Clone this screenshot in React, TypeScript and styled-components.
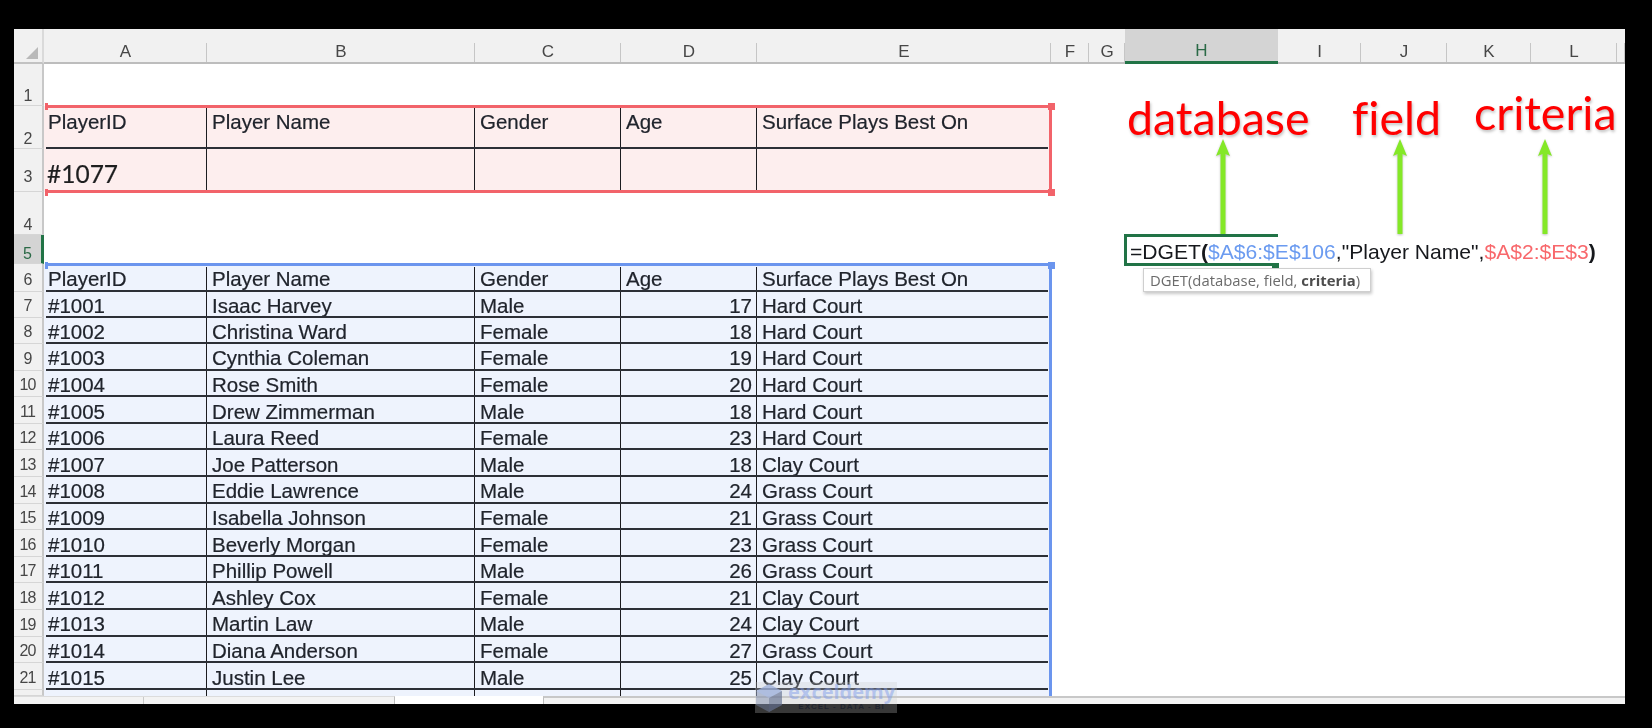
import React from "react";
import styled, { createGlobalStyle } from "styled-components";

const Global = createGlobalStyle`
  html, body { margin: 0; padding: 0; background: #000; }
  body { font-family: "Liberation Sans", Arial, sans-serif; }
`;

const Page = styled.div`
  position: relative;
  width: 1652px;
  height: 728px;
  background: #000;
  padding: 29px 27px 24px 14px;
  box-sizing: border-box;
  overflow: hidden;
`;

const Frame = styled.div`
  position: relative;
  display: flex;
  flex-direction: column;
  height: 675px;
  background: #f3f3f3;
  filter: blur(0.5px);
`;

const Sheet = styled.div`
  position: relative;
  display: grid;
  grid-template-columns: 30px 163px 268px 146px 136px 294px 38px 36px 153px 83px 86px 84px 86px 8px;
  grid-template-rows: 35px 42px 43px 43px 43px 29px 28px 25.5px repeat(14, 26.6px) 6.1px;
  height: 667px;
  background: #fff;
  overflow: hidden;
`;

const Corner = styled.div`
  display: flex;
  align-items: flex-end;
  justify-content: flex-end;
  background: #f1f1f1;
  border-bottom: 2px solid #c2c2c2;
  border-right: 2px solid #dadada;
  padding: 0 4px 3px 0;
  box-sizing: border-box;
`;

const ColHead = styled.div<{ $active?: boolean }>`
  position: relative;
  display: flex;
  align-items: flex-end;
  justify-content: center;
  padding-bottom: 1px;
  box-sizing: border-box;
  font-size: 17px;
  line-height: 19px;
  color: ${(p) => (p.$active ? "#2b6a47" : "#474747")};
  background: ${(p) => (p.$active ? "#d4d4d4" : "#f1f1f1")};
  border-bottom: ${(p) => (p.$active ? "3px solid #217346" : "2px solid #bdbdbd")};
  &::after {
    content: "";
    position: absolute;
    right: 0;
    bottom: 0;
    top: 14px;
    width: 1.5px;
    background: ${(p) => (p.$active ? "transparent" : "#c6c6c6")};
  }
`;

const RowHead = styled.div<{ $active?: boolean; $pad: number }>`
  grid-column: 1;
  display: flex;
  align-items: flex-end;
  justify-content: center;
  box-sizing: border-box;
  padding: 0 1px ${(p) => p.$pad}px 0;
  font-size: 16px;
  line-height: 18px;
  letter-spacing: -0.8px;
  color: ${(p) => (p.$active ? "#2b6a47" : "#474747")};
  background: ${(p) => (p.$active ? "#d4d4d4" : "#f1f1f1")};
  border-bottom: 1.5px solid #d6d6d6;
  border-right: ${(p) => (p.$active ? "3px solid #217346" : "2px solid #c8c8c8")};
`;

const Cell = styled.div<{
  $tone: "red" | "blue";
  $first?: boolean;
  $last?: boolean;
  $num?: boolean;
  $line?: boolean;
  $gap?: number;
  $end?: number;
  $place?: "top" | "mid" | "low";
}>`
  position: relative;
  display: flex;
  box-sizing: border-box;
  justify-content: ${(p) => (p.$num ? "flex-end" : "flex-start")};
  align-items: ${(p) => (p.$place === "top" ? "flex-start" : p.$place === "low" ? "flex-end" : "center")};
  padding: ${(p) => (p.$place === "top" ? "4px" : p.$place === "low" ? "0" : "2px")} 5px 0 ${(p) => (p.$first ? 4 : 5)}px;
  font-size: 20.5px;
  line-height: 24px;
  color: #20242c;
  -webkit-text-stroke: 0.2px #20242c;
  white-space: nowrap;
  background: ${(p) => (p.$tone === "red" ? "#fdeeee" : "#eef3fd")};
  &::before {
    content: "";
    display: ${(p) => (p.$last ? "none" : "block")};
    position: absolute;
    top: ${(p) => p.$gap ?? 0}px;
    right: 0;
    bottom: ${(p) => p.$end ?? 0}px;
    width: 1.5px;
    background: #1c1c20;
  }
  &::after {
    content: "";
    display: ${(p) => (p.$line ? "block" : "none")};
    position: absolute;
    left: ${(p) => (p.$first ? 2 : 0)}px;
    right: ${(p) => (p.$last ? 3 : 0)}px;
    bottom: 0;
    height: 2px;
    background: #2c2f36;
  }
`;

const BigId = styled.span`
  font-family: Lato, "Open Sans", sans-serif;
  font-size: 24.5px;
  line-height: 30px;
  margin: 0 0 3px -1px;
  color: #1e1e1e;
`;

const RangeBox = styled.div<{ $color: string; $top: number; $height: number }>`
  position: absolute;
  left: 33px;
  top: ${(p) => p.$top}px;
  width: 1005px;
  height: ${(p) => p.$height}px;
  box-sizing: border-box;
  border: 3px solid ${(p) => p.$color};
  border-left: none;
`;

const Handle = styled.div<{ $color: string; $left: number; $top: number; $w?: number }>`
  position: absolute;
  left: ${(p) => p.$left}px;
  top: ${(p) => p.$top}px;
  width: ${(p) => p.$w ?? 7}px;
  height: 7px;
  background: ${(p) => p.$color};
`;

const ActiveCell = styled.div`
  position: absolute;
  left: 1110px;
  top: 205px;
  width: 154px;
  height: 32px;
  box-sizing: border-box;
  border: 3px solid #217346;
  border-right: none;
`;

const FillHandle = styled.div`
  position: absolute;
  left: 1258px;
  top: 234px;
  width: 7px;
  height: 5px;
  background: #217346;
`;

const Formula = styled.div`
  position: absolute;
  left: 1116px;
  top: 210px;
  font-size: 21.1px;
  line-height: 26px;
  color: #16181c;
  white-space: nowrap;
`;

const Ref = styled.span<{ $c: string }>`
  color: ${(p) => p.$c};
`;

const Paren = styled.b`
  font-weight: 700;
`;

const Tip = styled.div`
  position: absolute;
  left: 1129px;
  top: 239px;
  width: 228px;
  height: 24px;
  box-sizing: border-box;
  display: flex;
  align-items: center;
  padding: 0 0 1px 6px;
  background: #fff;
  border: 1px solid #cfcfcf;
  box-shadow: 1px 2px 3px rgba(0, 0, 0, 0.22);
  font-family: "Open Sans", sans-serif;
  font-size: 14.85px;
  color: #6b6b6b;
  white-space: nowrap;
  b { font-weight: 700; color: #4d4d4d; }
`;

const Note = styled.div<{ $left: number; $top: number }>`
  position: absolute;
  left: ${(p) => p.$left}px;
  top: ${(p) => p.$top}px;
  font-family: Lato, "Open Sans", sans-serif;
  font-size: 46.5px;
  line-height: 56px;
  font-variant-ligatures: none;
  color: #ff0000;
  white-space: nowrap;
  text-shadow: 1px 2px 3px rgba(0, 0, 0, 0.25);
`;

const ArrowSvg = styled.svg<{ $left: number }>`
  position: absolute;
  left: ${(p) => p.$left}px;
  top: 109px;
  width: 18px;
  height: 98px;
  filter: drop-shadow(0 1px 1px rgba(0, 0, 0, 0.25));
`;

const TabStrip = styled.div`
  display: flex;
  height: 8px;
  background: #f3f3f3;
`;

const TabLeft = styled.div`
  width: 381px;
  box-sizing: border-box;
  background: linear-gradient(to right, #f3f3f3 129px, #c9c9c9 129px, #c9c9c9 130px, #f3f3f3 130px);
  border-top: 1.5px solid #dcdcdc;
  border-right: 1.5px solid #bdbdbd;
`;

const TabActive = styled.div`
  width: 148px;
  background: #fff;
`;

const TabRight = styled.div`
  flex: 1;
  box-sizing: border-box;
  border-left: 1.5px solid #bdbdbd;
  border-top: 2.5px solid #c8c8c8;
  background: #f3f3f3;
`;

const Watermark = styled.div`
  position: absolute;
  left: 755px;
  top: 682px;
  width: 142px;
  height: 31px;
  background: rgba(200, 200, 200, 0.28);
  display: flex;
  gap: 5px;
`;

const WmLogo = styled.svg`
  width: 28px;
  height: 31px;
  flex: none;
`;

const WmText = styled.div`
  display: flex;
  flex-direction: column;
  align-items: center;
`;

const WmName = styled.div`
  font-family: "Open Sans", sans-serif;
  font-weight: 700;
  font-size: 20px;
  line-height: 20px;
  color: rgba(125, 155, 235, 0.48);
`;

const WmSub = styled.div`
  font-family: "Liberation Sans", sans-serif;
  font-weight: 700;
  font-size: 8px;
  line-height: 10px;
  letter-spacing: 1px;
  color: #20242e;
  white-space: nowrap;
`;

const cols: [string, boolean?][] = [
  ["A"], ["B"], ["C"], ["D"], ["E"], ["F"], ["G"], ["H", true], ["I"], ["J"], ["K"], ["L"], [""],
];

const players: [string, string, string, number, string][] = [
  ["#1001", "Isaac Harvey", "Male", 17, "Hard Court"],
  ["#1002", "Christina Ward", "Female", 18, "Hard Court"],
  ["#1003", "Cynthia Coleman", "Female", 19, "Hard Court"],
  ["#1004", "Rose Smith", "Female", 20, "Hard Court"],
  ["#1005", "Drew Zimmerman", "Male", 18, "Hard Court"],
  ["#1006", "Laura Reed", "Female", 23, "Hard Court"],
  ["#1007", "Joe Patterson", "Male", 18, "Clay Court"],
  ["#1008", "Eddie Lawrence", "Male", 24, "Grass Court"],
  ["#1009", "Isabella Johnson", "Female", 21, "Grass Court"],
  ["#1010", "Beverly Morgan", "Female", 23, "Grass Court"],
  ["#1011", "Phillip Powell", "Male", 26, "Grass Court"],
  ["#1012", "Ashley Cox", "Female", 21, "Clay Court"],
  ["#1013", "Martin Law", "Male", 24, "Clay Court"],
  ["#1014", "Diana Anderson", "Female", 27, "Grass Court"],
  ["#1015", "Justin Lee", "Male", 25, "Clay Court"],
];

const headers = ["PlayerID", "Player Name", "Gender", "Age", "Surface Plays Best On"];

type Tone = "red" | "blue";

const TableRow = ({
  values,
  tone,
  line,
  place,
  gap,
  end,
}: {
  values: React.ReactNode[];
  tone: Tone;
  line?: boolean;
  place?: "top" | "mid" | "low";
  gap?: number;
  end?: number;
}) => (
  <>
    {values.map((v, i) => (
      <Cell
        key={i}
        $tone={tone}
        $first={i === 0}
        $last={i === 4}
        $num={typeof v === "number"}
        $line={line}
        $place={place}
        $gap={gap}
        $end={end}
      >
        {v}
      </Cell>
    ))}
  </>
);

const Arrow = ({ left }: { left: number }) => (
  <ArrowSvg $left={left} viewBox="0 0 18 98">
    <path d="M9 1 L16 18 L11.5 16 L11.5 96 L6.5 96 L6.5 16 L2 18 Z" fill="#84e827" />
  </ArrowSvg>
);

export default function App() {
  return (
    <>
      <Global />
      <Page>
        <Frame>
          <Sheet>
            <Corner>
              <svg width="12" height="12" viewBox="0 0 12 12">
                <path d="M12 0 V12 H0 Z" fill="#b9b9b9" />
              </svg>
            </Corner>
            {cols.map(([c, active], i) => (
              <ColHead key={i} $active={active}>
                {c}
              </ColHead>
            ))}

            <RowHead $pad={0}>1</RowHead>
            <RowHead $pad={0}>2</RowHead>
            <TableRow values={headers} tone="red" line place="top" gap={2} />
            <RowHead $pad={5}>3</RowHead>
            <TableRow values={[<BigId>#1077</BigId>, "", "", "", ""]} tone="red" place="low" end={2} />
            <RowHead $pad={0}>4</RowHead>
            <RowHead $active $pad={0}>5</RowHead>
            <RowHead $pad={2}>6</RowHead>
            <TableRow values={headers} tone="blue" line gap={3} />
            {players.map((p, i) => (
              <React.Fragment key={p[0]}>
                <RowHead $pad={2}>{i + 7}</RowHead>
                <TableRow values={p} tone="blue" line />
              </React.Fragment>
            ))}
            <RowHead $pad={0} />
            <TableRow values={["", "", "", "", ""]} tone="blue" />

            <RangeBox $color="#f2636a" $top={76} $height={88} />
            <Handle $color="#f2636a" $left={31} $top={74} $w={3} />
            <Handle $color="#f2636a" $left={1034} $top={74} />
            <Handle $color="#f2636a" $left={31} $top={160} $w={3} />
            <Handle $color="#f2636a" $left={1034} $top={160} />
            <RangeBox $color="#6b95ee" $top={234} $height={460} />
            <Handle $color="#6b95ee" $left={31} $top={233} $w={3} />
            <Handle $color="#6b95ee" $left={1034} $top={233} />

            <Note $left={1113} $top={60}>database</Note>
            <Note $left={1338} $top={60}>field</Note>
            <Note $left={1460} $top={55}>criteria</Note>
            <Arrow left={1200} />
            <Arrow left={1377} />
            <Arrow left={1522} />

            <ActiveCell />
            <FillHandle />
            <Formula>
              =DGET<Paren>(</Paren>
              <Ref $c="#6b9bf0">$A$6:$E$106</Ref>,"Player Name",
              <Ref $c="#f8686c">$A$2:$E$3</Ref>
              <Paren>)</Paren>
            </Formula>
            <Tip>
              <span>
                DGET(database, field, <b>criteria</b>)
              </span>
            </Tip>
          </Sheet>
          <TabStrip>
            <TabLeft />
            <TabActive />
            <TabRight />
          </TabStrip>
        </Frame>
        <Watermark>
          <WmLogo viewBox="0 0 28 31">
            <path d="M14 2 L27 9 V23 L14 30 L1 23 V9 Z" fill="rgba(120,135,170,0.45)" />
            <path d="M14 2 L27 9 L14 16 L1 9 Z" fill="rgba(170,190,235,0.55)" />
            <path d="M14 16 L27 9 V23 L14 30 Z" fill="rgba(90,100,130,0.4)" />
          </WmLogo>
          <WmText>
            <WmName>exceldemy</WmName>
            <WmSub>EXCEL - DATA - BI</WmSub>
          </WmText>
        </Watermark>
      </Page>
    </>
  );
}
